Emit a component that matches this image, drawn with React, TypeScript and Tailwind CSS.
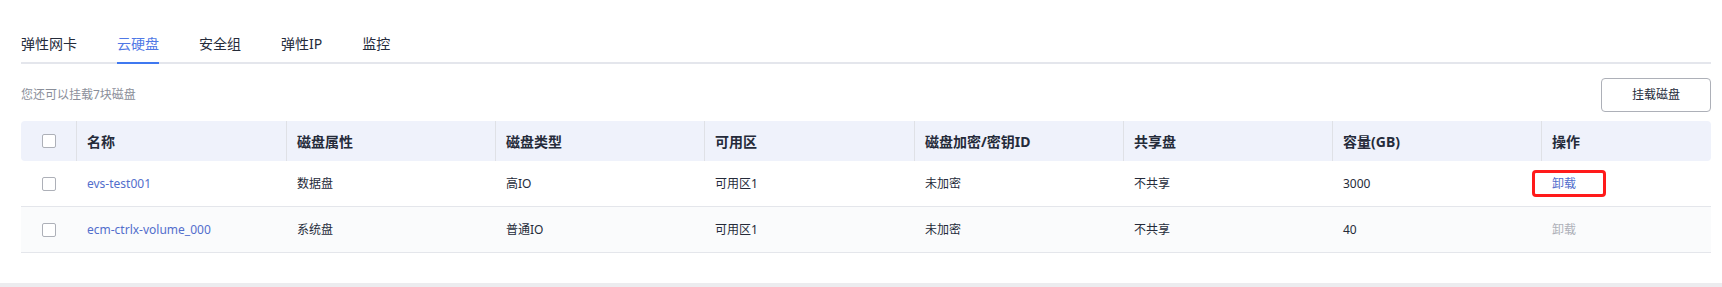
import React from 'react';

const tabs = ['弹性网卡', '云硬盘', '安全组', '弹性IP', '监控'];

const columns = ['名称', '磁盘属性', '磁盘类型', '可用区', '磁盘加密/密钥ID', '共享盘', '容量(GB)', '操作'];

const disks = [
  { name: 'evs-test001', attr: '数据盘', type: '高IO', zone: '可用区1', encrypt: '未加密', shared: '不共享', size: '3000', canDetach: true },
  { name: 'ecm-ctrlx-volume_000', attr: '系统盘', type: '普通IO', zone: '可用区1', encrypt: '未加密', shared: '不共享', size: '40', canDetach: false },
];

const gridCols = 'grid grid-cols-[55px_210px_209px_209px_210px_209px_209px_209px_1fr]';

function Checkbox() {
  return <span className="block w-[14px] h-[14px] rounded-[2px] border border-[#adb0b8] bg-white" />;
}

export default function App() {
  return (
    <div
      className="min-h-screen bg-[#ececef]"
      style={{ fontFamily: '"Noto Sans", "Noto Sans CJK SC", sans-serif' }}
    >
      <div className="bg-white pl-[21px] pr-[11px] pt-[33px] pb-[30px]">
        {/* tabs */}
        <div className="flex gap-[40px] border-b-2 border-[#e4e6ec]">
          {tabs.map((t, i) => (
            <div
              key={t}
              className={
                'pb-[7px] -mb-[2px] border-b-2 text-[14px] leading-[22px] ' +
                (i === 1 ? 'border-[#3f78f0] text-[#4f78e6]' : 'border-transparent text-[#252b3a]')
              }
            >
              {t}
            </div>
          ))}
        </div>

        {/* toolbar */}
        <div className="mt-[14px] flex items-center justify-between h-[34px]">
          <span className="text-[12px] leading-[18px] text-[#8a8e99]">您还可以挂载7块磁盘</span>
          <button className="w-[110px] h-[34px] rounded-[4px] border border-[#adb0b8] bg-white text-[12px] text-[#252b3a]">
            挂载磁盘
          </button>
        </div>

        {/* table */}
        <div className="mt-[9px]">
          <div className={gridCols + ' h-[40px] bg-[#eff2fb] rounded-[4px] text-[14px] font-bold text-[#252b3a]'}>
            <div className="flex items-center justify-center">
              <Checkbox />
            </div>
            {columns.map((c) => (
              <div key={c} className="flex items-center border-l border-[#dfe1e6] pl-[10px]">
                {c}
              </div>
            ))}
          </div>

          {disks.map((d, i) => (
            <div
              key={d.name}
              className={
                gridCols +
                ' h-[46px] border-b border-[#e4e6eb] text-[12px] text-[#252b3a] ' +
                (i === 1 ? 'bg-[#fafbfc]' : 'bg-white')
              }
            >
              <div className="flex items-center justify-center">
                <Checkbox />
              </div>
              <div className="flex items-center pl-[11px] text-[#526ecc]">{d.name}</div>
              <div className="flex items-center pl-[11px]">{d.attr}</div>
              <div className="flex items-center pl-[11px]">{d.type}</div>
              <div className="flex items-center pl-[11px]">{d.zone}</div>
              <div className="flex items-center pl-[11px]">{d.encrypt}</div>
              <div className="flex items-center pl-[11px]">{d.shared}</div>
              <div className="flex items-center pl-[11px]">{d.size}</div>
              <div className="flex items-center pl-[11px]">
                {d.canDetach ? (
                  <span className="relative inline-block leading-[18px] text-[#526ecc]">
                    卸载
                    <span className="absolute -left-[20px] -right-[30px] -top-[5px] -bottom-[4px] rounded-[4px] border-[3px] border-[#ff1a1a]" />
                  </span>
                ) : (
                  <span className="text-[#adb0b8]">卸载</span>
                )}
              </div>
            </div>
          ))}
        </div>
      </div>
    </div>
  );
}
